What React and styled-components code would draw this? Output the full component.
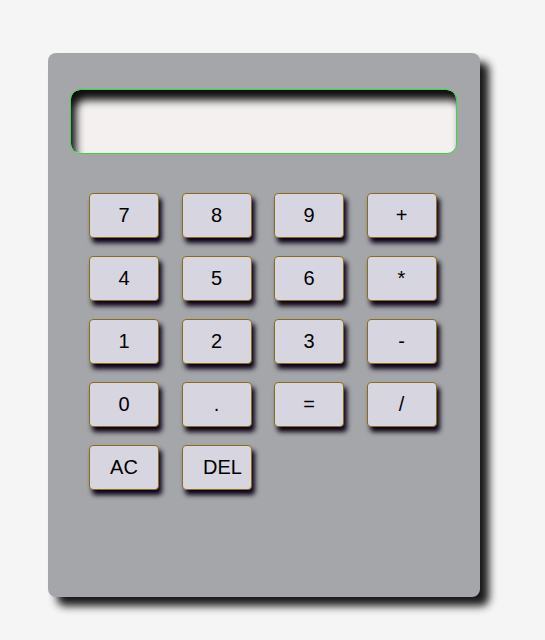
import React from 'react'
import styled, { createGlobalStyle } from 'styled-components'

const GlobalStyle = createGlobalStyle`
  html, body {
    margin: 0;
    padding: 0;
    background: #f5f5f5;
    font-family: "Liberation Sans", Arial, sans-serif;
  }
`

const Page = styled.div`
  padding: 53px 0 40px 48px;
`

const Calculator = styled.div`
  width: 432px;
  height: 544px;
  box-sizing: border-box;
  background: #a5a6aa;
  border-radius: 8px;
  box-shadow: 9px 9px 8px rgba(0, 0, 0, 0.9);
  padding: 36px 23px 0 22px;
`

const Display = styled.div`
  height: 65px;
  box-sizing: border-box;
  background: #f4f0f0;
  border: 1px solid #3ad34a;
  border-radius: 10px;
  box-shadow: inset 5px 10px 8px rgba(0, 0, 0, 0.95);
`

const Keys = styled.div`
  display: grid;
  grid-template-columns: repeat(4, 70px);
  column-gap: 22.5px;
  row-gap: 18px;
  margin: 39px 0 0 19px;
`

const Key = styled.button`
  width: 70px;
  height: 45px;
  box-sizing: border-box;
  background: #d7d5e0;
  border: 1px solid #8a6d1b;
  border-radius: 4px;
  box-shadow: 3px 5px 5px rgba(10, 0, 20, 1);
  font-family: "Liberation Sans", Arial, sans-serif;
  font-size: 20px;
  color: #000;
  padding: 0 0 0 ${(p) => (p.$shift ? '12px' : '0')};
  cursor: pointer;
`

const keys = ['7', '8', '9', '+', '4', '5', '6', '*', '1', '2', '3', '-', '0', '.', '=', '/', 'AC', 'DEL']

export default function App() {
  return (
    <Page>
      <GlobalStyle />
      <Calculator>
        <Display />
        <Keys>
          {keys.map((k) => (
            <Key key={k} $shift={k === 'DEL'}>
              {k}
            </Key>
          ))}
        </Keys>
      </Calculator>
    </Page>
  )
}
